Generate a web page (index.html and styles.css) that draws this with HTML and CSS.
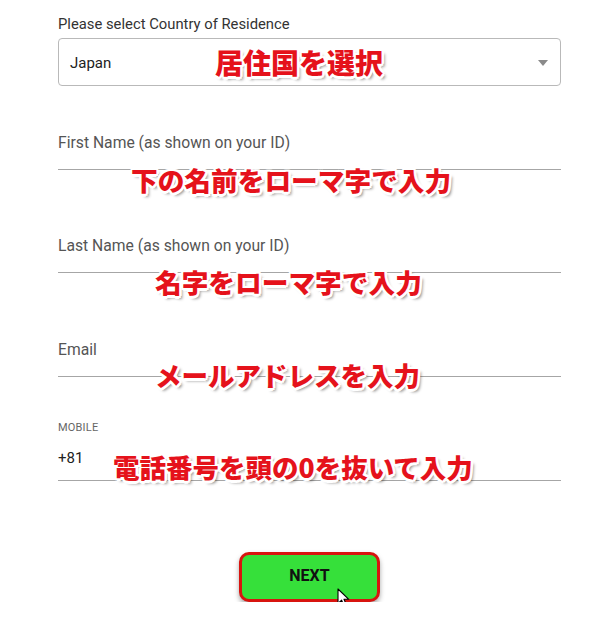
FILE: index.html
```html
<!DOCTYPE html>
<html lang="ja">
<head>
<meta charset="utf-8">
<title>Registration</title>
<link rel="stylesheet" href="styles.css">
</head>
<body>
<form class="form">
  <div class="group group-select">
    <div class="label label-dark">Please select Country of Residence</div>
    <div class="select">
      <span class="select-value">Japan</span>
      <span class="select-arrow"></span>
    </div>
    <span class="note note-country">居住国を選択</span>
  </div>

  <div class="group group-first">
    <div class="label">First Name (as shown on your ID)</div>
    <div class="line-input"></div>
    <span class="note note-first">下の名前をローマ字で入力</span>
  </div>

  <div class="group group-last">
    <div class="label">Last Name (as shown on your ID)</div>
    <div class="line-input"></div>
    <span class="note note-last">名字をローマ字で入力</span>
  </div>

  <div class="group group-email">
    <div class="label">Email</div>
    <div class="line-input"></div>
    <span class="note note-email">メールアドレスを入力</span>
  </div>

  <div class="group group-mobile">
    <div class="label-small">MOBILE</div>
    <div class="line-input mobile-input">+81</div>
    <span class="note note-mobile">電話番号を頭の0を抜いて入力</span>
  </div>

  <div class="actions">
    <button type="button" class="next-btn">NEXT
      <svg class="cursor" width="14" height="20" viewBox="0 0 14 20" aria-hidden="true">
        <path d="M1 1 L1 15.5 L4.6 12.2 L7.2 18.2 L9.6 17.2 L7 11.3 L11.8 11.3 Z" fill="#fff" stroke="#000" stroke-width="1.1" stroke-linejoin="round"/>
      </svg>
    </button>
  </div>
</form>
</body>
</html>
```

FILE: styles.css
```css
html, body {
  margin: 0;
  padding: 0;
  background: #fff;
}

body {
  font-family: Roboto, "Liberation Sans", sans-serif;
  color: #333;
}

.form {
  width: 503px;
  margin-left: 58px;
  padding-top: 15px;
  display: flex;
  flex-direction: column;
}

.group {
  position: relative;
}

.label {
  font-size: 15.7px;
  line-height: 18px;
  color: #555;
}

.label-dark {
  font-size: 14.8px;
  color: #333;
}

.select {
  margin-top: 5px;
  height: 48px;
  box-sizing: border-box;
  border: 1px solid #b9b9b9;
  border-radius: 4px;
  padding: 0 12px 0 11px;
  display: flex;
  align-items: center;
  justify-content: space-between;
  font-size: 15px;
  color: #222;
}

.select-value {
  line-height: 18px;
  margin-top: 2px;
}

.select-arrow {
  width: 0;
  height: 0;
  border-left: 5px solid transparent;
  border-right: 5px solid transparent;
  border-top: 6px solid #8a8a8a;
  margin-top: 2px;
}

.line-input {
  height: 17px;
  border-bottom: 1px solid #a6a6a6;
}

.group-first { margin-top: 48px; }
.group-last { margin-top: 67px; }
.group-email { margin-top: 68px; }
.group-mobile { margin-top: 44px; }

.label-small {
  font-size: 11px;
  line-height: 13px;
  color: #666;
  letter-spacing: 0.2px;
}

.mobile-input {
  margin-top: 15px;
  height: 31px;
  font-size: 15px;
  line-height: 18px;
  color: #222;
}

.note {
  position: absolute;
  white-space: nowrap;
  font-family: "Noto Sans CJK JP", "Noto Sans CJK SC", sans-serif;
  font-weight: 900;
  font-size: 26.7px;
  line-height: 28px;
  color: #e5121b;
  text-shadow:
    2.5px 0 0 #fff, -2.5px 0 0 #fff, 0 2.5px 0 #fff, 0 -2.5px 0 #fff,
    1.8px 1.8px 0 #fff, -1.8px 1.8px 0 #fff, 1.8px -1.8px 0 #fff, -1.8px -1.8px 0 #fff,
    3px 3px 3px rgba(0, 0, 0, 0.45);
}

.note-country { top: 33px; left: 157px; font-size: 28px; }
.note-first { top: 32px; left: 73px; }
.note-last { top: 31px; left: 97px; }
.note-email { top: 20px; left: 97px; font-size: 26.5px; }
.note-mobile { top: 32px; left: 55px; font-size: 26.5px; }

.actions {
  margin-top: 71px;
  display: flex;
  justify-content: center;
}

.next-btn {
  position: relative;
  width: 141px;
  height: 50px;
  box-sizing: border-box;
  border: 3px solid #d8140f;
  border-radius: 10px;
  background: #36e03a;
  box-shadow: 0 3px 5px rgba(0, 0, 0, 0.35);
  font-family: Roboto, "Liberation Sans", sans-serif;
  font-weight: 700;
  font-size: 16px;
  color: #111;
  padding: 0 0 3px 0;
  cursor: pointer;
}

.cursor {
  position: absolute;
  left: 95px;
  top: 33px;
}
```
